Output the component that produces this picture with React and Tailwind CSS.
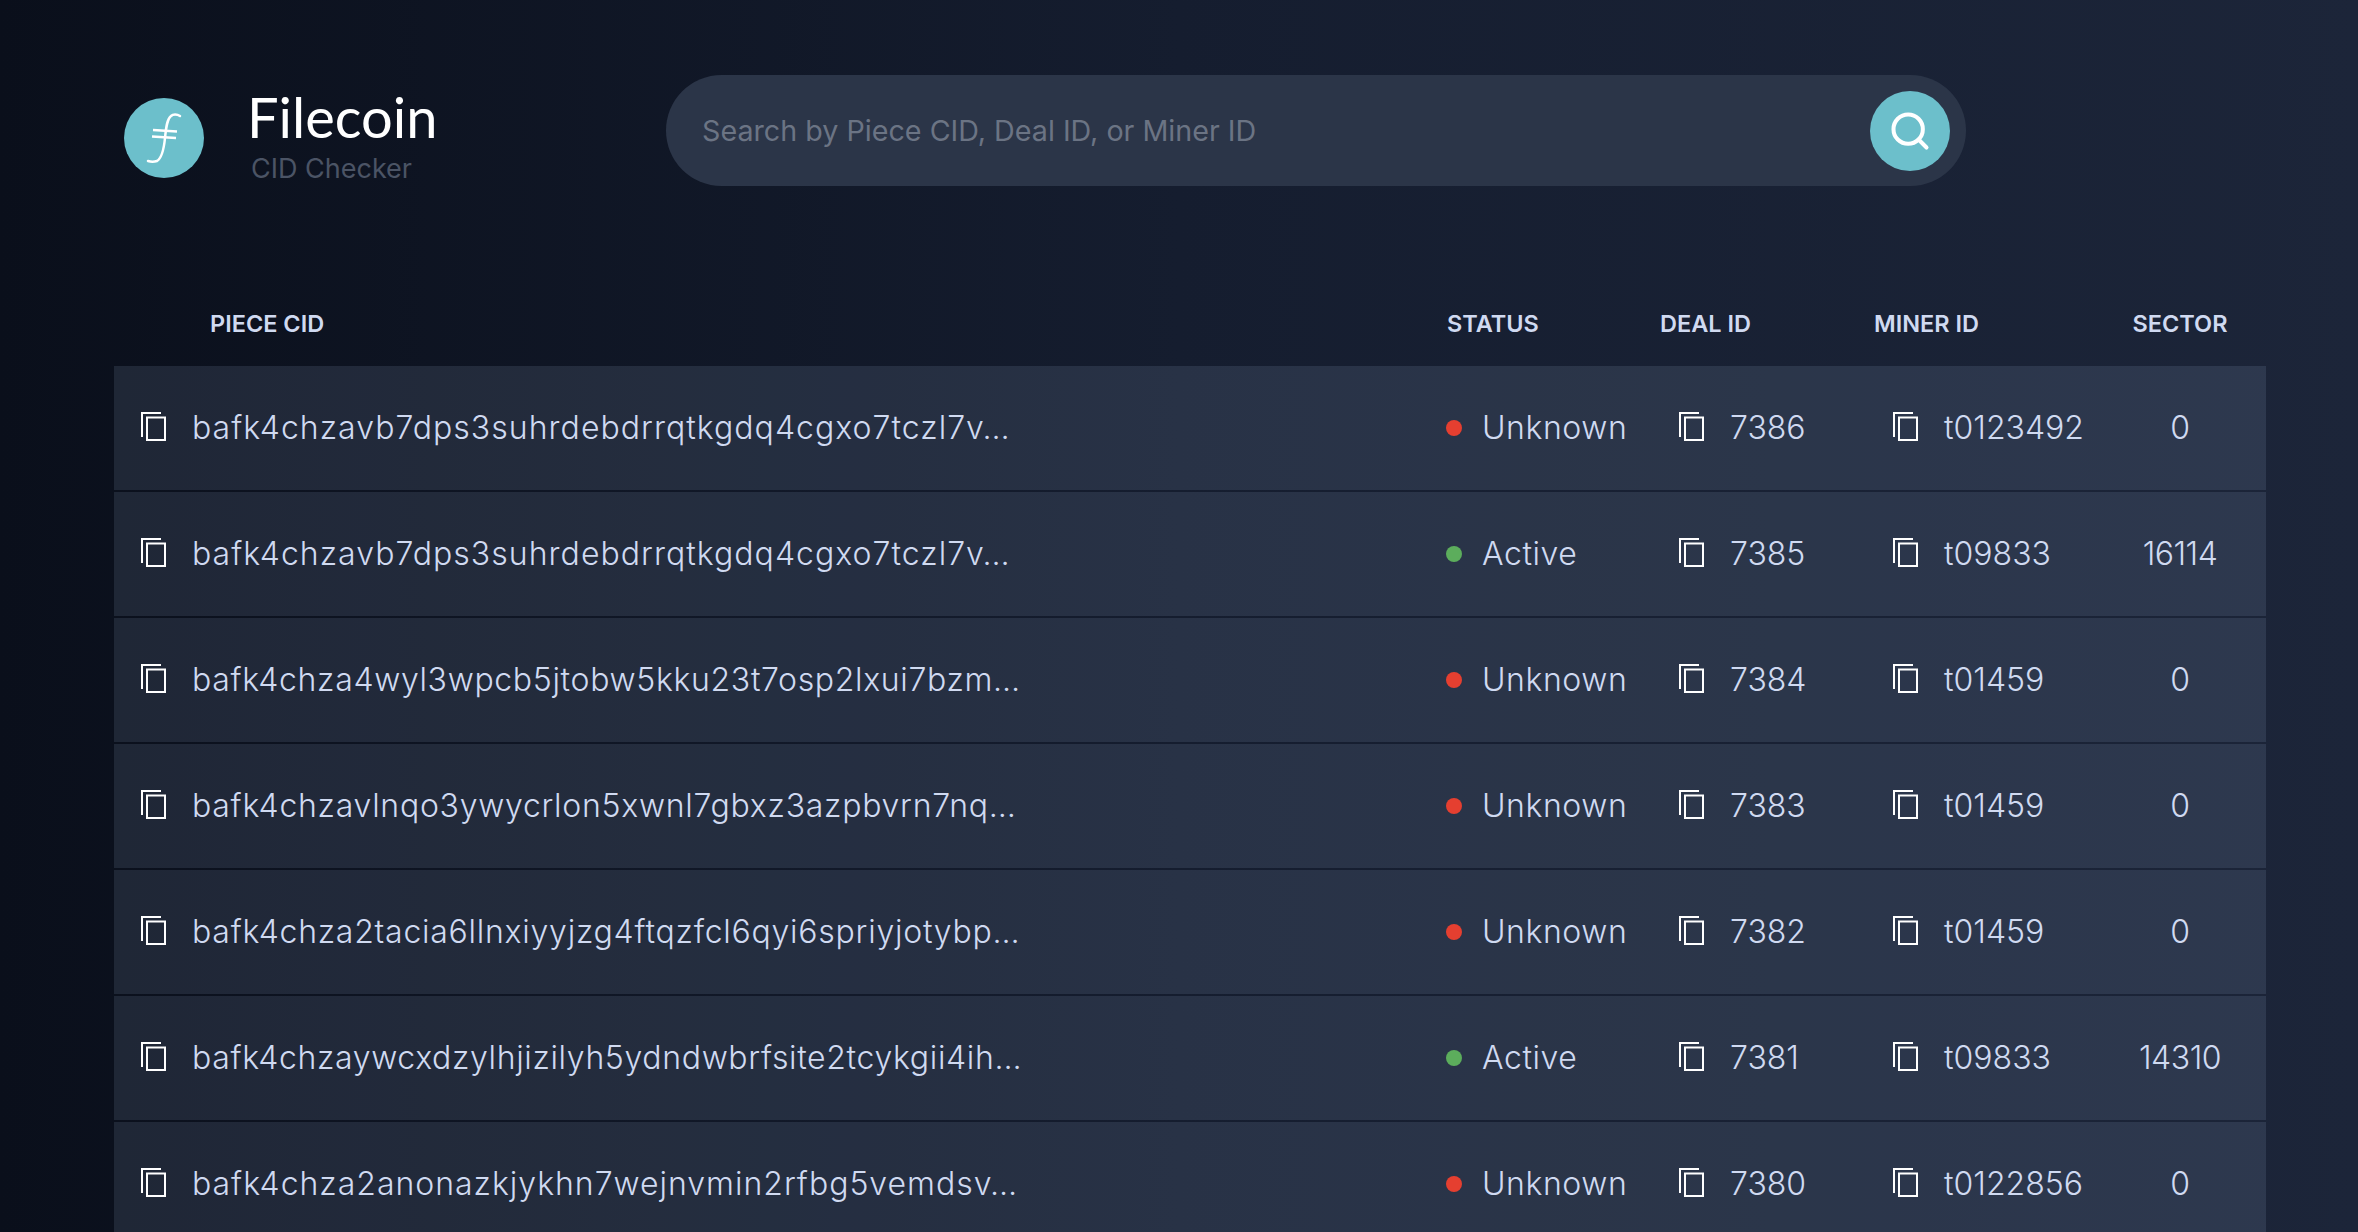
import { Search } from "lucide-react";

const rows = [
  { cid: "bafk4chzavb7dps3suhrdebdrrqtkgdq4cgxo7tczl7v…", track: "tracking-[1.03px]", status: "Unknown", deal: "7386", miner: "t0123492", sector: "0" },
  { cid: "bafk4chzavb7dps3suhrdebdrrqtkgdq4cgxo7tczl7v…", track: "tracking-[1.03px]", status: "Active", deal: "7385", miner: "t09833", sector: "16114" },
  { cid: "bafk4chza4wyl3wpcb5jtobw5kku23t7osp2lxui7bzm…", track: "tracking-[0.66px]", status: "Unknown", deal: "7384", miner: "t01459", sector: "0" },
  { cid: "bafk4chzavlnqo3ywycrlon5xwnl7gbxz3azpbvrn7nq…", track: "tracking-[0.73px]", status: "Unknown", deal: "7383", miner: "t01459", sector: "0" },
  { cid: "bafk4chza2tacia6llnxiyyjzg4ftqzfcl6qyi6spriyjotybp…", track: "tracking-[0.75px]", status: "Unknown", deal: "7382", miner: "t01459", sector: "0" },
  { cid: "bafk4chzaywcxdzylhjizilyh5ydndwbrfsite2tcykgii4ih…", track: "tracking-[0.65px]", status: "Active", deal: "7381", miner: "t09833", sector: "14310" },
  { cid: "bafk4chza2anonazkjykhn7wejnvmin2rfbg5vemdsv…", track: "tracking-[0.98px]", status: "Unknown", deal: "7380", miner: "t0122856", sector: "0" },
];

function CopyIcon() {
  return (
    <svg width="26" height="30" viewBox="0 0 26 30" fill="none" stroke="white" strokeWidth="2" className="shrink-0 mb-[4px]">
      <path d="M21 2H2v24" />
      <rect x="7" y="6.500" width="18" height="22.500" />
    </svg>
  );
}

function Logo() {
  return (
    <div className="w-20 h-20 rounded-full bg-[#6cbfcb] flex items-center justify-center mt-[23px] shrink-0">
      <svg width="80" height="80" viewBox="0 0 80 80" fill="none" stroke="white">
        <path d="M56 18c-3-2-7-2-9 0-4 3-5 12-6 22-1 10-3 20-8 23-3 1-6 1-9 0" strokeWidth="2.500" strokeLinecap="round" />
        <path d="M29 32l24 1.500M28 38.500l24 1.500" strokeWidth="2.500" />
      </svg>
    </div>
  );
}

export default function App() {
  return (
    <div className="h-screen overflow-hidden bg-gradient-to-r from-[#0a0f1b] via-[#151d2f] to-[#1c2539] text-[#d0daf1] font-['Inter',sans-serif]">
      <div className="flex pt-[75px] pl-[124px] h-[297px]">
        <Logo />
        <div className="ml-[43px] w-[419px] mt-[9px]">
          <div className="text-[56px] leading-[66px] text-white font-['Lato',sans-serif]">Filecoin</div>
          <div className="text-[27px] leading-[30px] text-[#4b5465] ml-[4px] mt-[4px]">CID Checker</div>
        </div>
        <div className="w-[1300px] h-[111px] rounded-full bg-[#2b3548] flex items-center justify-between pl-[36px] pr-[16px]">
          <span className="text-[28.7px] text-[#6b7484]">Search by Piece CID, Deal ID, or Miner ID</span>
          <button className="w-20 h-20 rounded-full bg-[#6cbfcb] flex items-center justify-center">
            <Search size={44} color="white" strokeWidth={2.2} />
          </button>
        </div>
      </div>

      <div className="ml-[114px] mr-[92px]">
        <div className="grid grid-cols-[1333px_213px_214px_220px_172px] h-[69px] pb-[16px] items-center text-[23.5px] font-semibold">
          <div className="pl-[96px]">PIECE CID</div>
          <div>STATUS</div>
          <div>DEAL ID</div>
          <div>MINER ID</div>
          <div className="text-center">SECTOR</div>
        </div>
        <div className="flex flex-col gap-[2px]">
          {rows.map((row, i) => (
            <div key={i} className="grid grid-cols-[1333px_213px_214px_220px_172px] h-[124px] shrink-0 items-center bg-[#b8cff0]/[0.12] text-[32px] font-[350]">
              <div className="flex items-center gap-[26px] pl-[26px]">
                <CopyIcon />
                <span className={row.track}>{row.cid}</span>
              </div>
              <div className="flex items-center gap-[20px] -ml-px">
                <span className={`w-4 h-4 rounded-full ${row.status === "Active" ? "bg-[#5cad5c]" : "bg-[#e53f30]"}`} />
                <span className="tracking-[0.55px]">{row.status}</span>
              </div>
              <div className="flex items-center gap-[26px] pl-[18px]">
                <CopyIcon />
                <span>{row.deal}</span>
              </div>
              <div className="flex items-center gap-[26px] pl-[18px]">
                <CopyIcon />
                <span>{row.miner}</span>
              </div>
              <div className="text-center tracking-[-0.5px]">{row.sector}</div>
            </div>
          ))}
        </div>
      </div>
    </div>
  );
}
